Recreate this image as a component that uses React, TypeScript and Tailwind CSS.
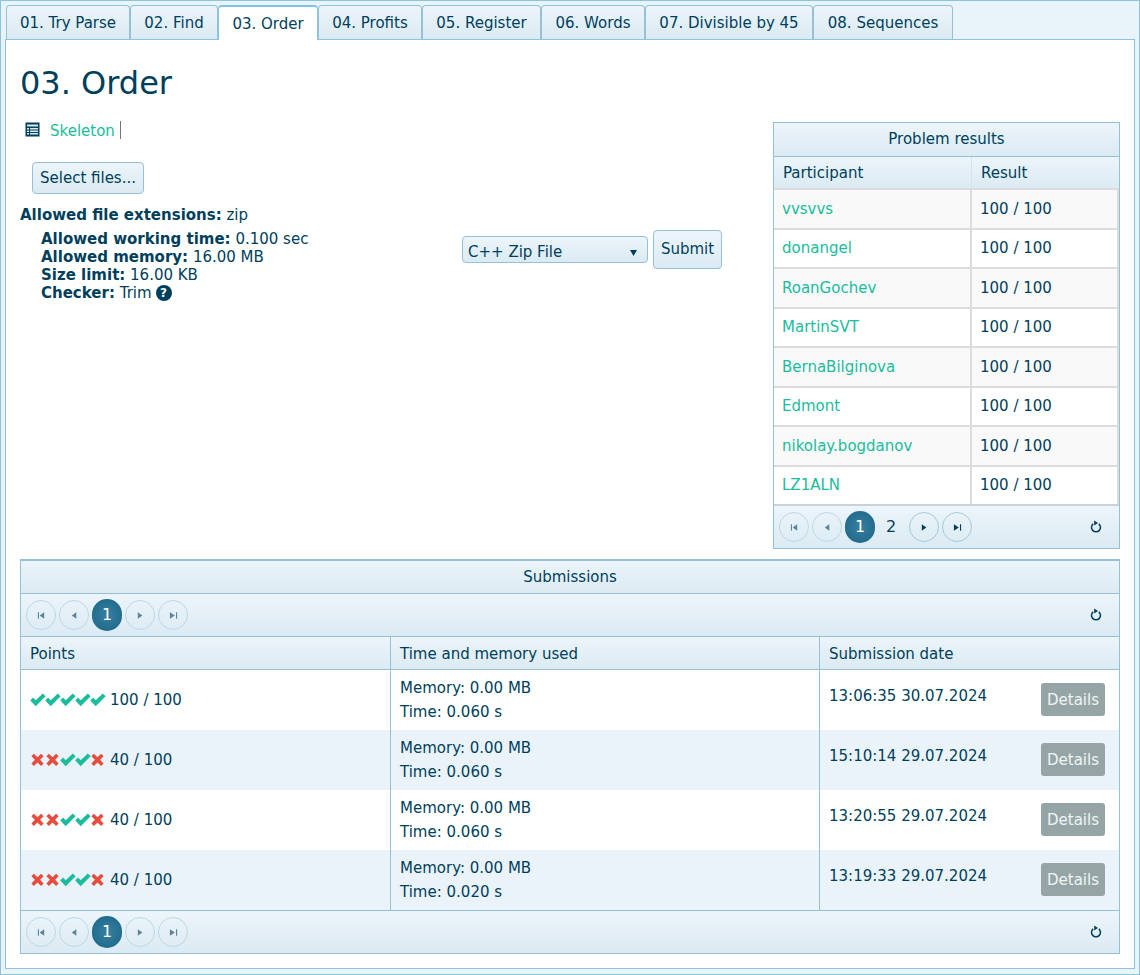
const TABS = [
  { label: "01. Try Parse", w: "w-[124px]" },
  { label: "02. Find", w: "w-[88px]" },
  { label: "03. Order", w: "w-[100px]", active: true },
  { label: "04. Profits", w: "w-[104px]" },
  { label: "05. Register", w: "w-[119px]" },
  { label: "06. Words", w: "w-[104px]" },
  { label: "07. Divisible by 45", w: "w-[168px]" },
  { label: "08. Sequences", w: "w-[140px]" },
];

const RESULTS = [
  "vvsvvs",
  "donangel",
  "RoanGochev",
  "MartinSVT",
  "BernaBilginova",
  "Edmont",
  "nikolay.bogdanov",
  "LZ1ALN",
];

const SUBMISSIONS = [
  { marks: [1, 1, 1, 1, 1], points: "100 / 100", time: "0.060", date: "13:06:35 30.07.2024" },
  { marks: [0, 0, 1, 1, 0], points: "40 / 100", time: "0.060", date: "15:10:14 29.07.2024" },
  { marks: [0, 0, 1, 1, 0], points: "40 / 100", time: "0.060", date: "13:20:55 29.07.2024" },
  { marks: [0, 0, 1, 1, 0], points: "40 / 100", time: "0.020", date: "13:19:33 29.07.2024" },
];

const GRAD = "bg-gradient-to-b from-[#ecf5fa] to-[#dbeaf3]";

function Check() {
  return (
    <svg width="15" height="14" viewBox="0 0 15 14" className="block overflow-visible">
      <path d="M0.3 7.4 L3 4.6 L5.7 7.3 L12.8 0.6 L15.6 3.3 L5.7 13.2 Z" fill="#1abc9c" />
    </svg>
  );
}

function Cross() {
  return (
    <svg width="15" height="14" viewBox="0 0 15 14" className="block overflow-visible">
      <path d="M1.4 3.2 L3.9 0.7 L7.5 4.2 L11.1 0.7 L13.6 3.2 L10.1 6.8 L13.6 10.4 L11.1 12.9 L7.5 9.4 L3.9 12.9 L1.4 10.4 L4.9 6.8 Z" fill="#e74c3c" />
    </svg>
  );
}

function PagerGlyph({ kind, enabled }: { kind: "first" | "prev" | "next" | "last"; enabled?: boolean }) {
  const body = {
    first: "M1 1h1.2v7H1z M8 1v7L3 4.5z",
    prev: "M7 1v7L2 4.5z",
    next: "M2 1v7l5-3.5z",
    last: "M7.8 1H9v7H7.8z M1 1v7l5.5-3.5z",
  }[kind];
  return (
    <svg width="9" height="9" viewBox="0 0 10 9" className={enabled ? "opacity-100" : "opacity-60"}>
      <path d={body} fill="#003f5c" />
    </svg>
  );
}

function PagerButton({ kind, enabled }: { kind: "first" | "prev" | "next" | "last"; enabled?: boolean }) {
  return (
    <span
      className={`flex h-[30px] w-[30px] items-center justify-center rounded-full border ${
        enabled ? "border-[#a3c9dc]" : "border-[#bcd8e6]"
      }`}
    >
      <PagerGlyph kind={kind} enabled={enabled} />
    </span>
  );
}

function Pager({ pages, canNext }: { pages: number; canNext?: boolean }) {
  return (
    <div className={`flex h-[42px] items-center justify-between pl-[5px] pr-[16px] ${GRAD}`}>
      <div className="flex items-center gap-[3px]">
        <PagerButton kind="first" />
        <PagerButton kind="prev" />
        <span className="flex h-[32px] w-[30px] items-center justify-center rounded-full bg-[radial-gradient(circle,_#3a7f9f,_#176486)] text-[16px] text-white">
          1
        </span>
        {pages > 1 && <span className="flex h-[30px] w-[28px] items-center justify-center pr-[2px] text-[16px]">2</span>}
        <PagerButton kind="next" enabled={canNext} />
        <PagerButton kind="last" enabled={canNext} />
      </div>
      <svg width="14" height="14" viewBox="0 0 14 14" fill="none">
        <path d="M4.2 3.8A4.5 4.5 0 1 0 9.8 3.8" stroke="#003f5c" strokeWidth="1.5" />
        <path d="M5.2 0.6v5L9 3z" fill="#003f5c" />
      </svg>
    </div>
  );
}

function ProblemResults() {
  return (
    <div className="h-[427px] w-[347px] border border-[#94c1d6]">
      <div className={`flex h-[34px] items-center justify-center border-b border-[#94c1d6] ${GRAD}`}>Problem results</div>
      <div className={`flex h-[31px] items-center ${GRAD}`}>
        <div className="flex h-full w-[198px] items-center border-r border-[#d5e4ec] pl-[9px] pt-[2px]">Participant</div>
        <div className="pl-[9px] pt-[2px]">Result</div>
      </div>
      {RESULTS.map((name, i) => (
        <div
          key={name}
          className={`flex h-[39.5px] border-r-2 border-t-2 border-[#dcdcdc] ${i % 2 === 0 ? "bg-[#f9f9f9]" : "bg-white"}`}
        >
          <div className="flex w-[198px] items-center border-r-2 border-[#dcdcdc] pl-[8px] text-[#1abc9c]">{name}</div>
          <div className="flex items-center pl-[8px]">100 / 100</div>
        </div>
      ))}
      <div className="border-t-2 border-[#c8d3d9]">
        <Pager pages={2} canNext />
      </div>
    </div>
  );
}

function Submissions() {
  return (
    <div className="border border-t-2 border-[#94c1d6]">
      <div className={`flex h-[33px] items-center justify-center border-b border-[#94c1d6] ${GRAD}`}>Submissions</div>
      <div className="border-b border-[#94c1d6]">
        <Pager pages={1} />
      </div>
      <div className={`flex h-[33px] items-center border-b border-[#94c1d6] ${GRAD}`}>
        <div className="flex h-full w-[370px] items-center border-r border-[#94c1d6] pl-[9px] pt-[2px]">Points</div>
        <div className="flex h-full w-[429px] items-center border-r border-[#94c1d6] pl-[9px] pt-[2px]">Time and memory used</div>
        <div className="pl-[9px] pt-[2px]">Submission date</div>
      </div>
      {SUBMISSIONS.map((s, i) => (
        <div key={s.date} className={`flex h-[60px] ${i % 2 === 1 ? "bg-[#e9f3f9]" : "bg-white"}`}>
          <div className="flex w-[370px] items-center border-r border-[#94c1d6] pl-[9px]">
            <span className="flex">
              {s.marks.map((m, j) => (m ? <Check key={j} /> : <Cross key={j} />))}
            </span>
            <span className="ml-[5px]">{s.points}</span>
          </div>
          <div className="flex w-[429px] flex-col justify-center border-r border-[#94c1d6] pl-[9px] leading-[24px]">
            <div>Memory: 0.00 MB</div>
            <div>Time: {s.time} s</div>
          </div>
          <div className="flex flex-1 items-start justify-between pl-[9px] pr-[14px]">
            <span className="mt-[15px]">{s.date}</span>
            <span className="mt-[13px] flex h-[33px] w-[64px] items-center justify-center rounded-[3px] bg-[#95a5a6] pt-[2px] text-[#f0f4f5]">
              Details
            </span>
          </div>
        </div>
      ))}
      <div className="border-t border-[#94c1d6]">
        <Pager pages={1} />
      </div>
    </div>
  );
}

export default function App() {
  return (
    <div className="h-[975px] w-[1140px] border border-[#8cc4de] bg-[#e9f4fa] pl-[4px] pr-[4px] pt-[4px] font-['DejaVu_Sans',sans-serif] text-[15px] text-[#003f5c]">
      <div className="relative z-10 flex pl-[1px]">
        {TABS.map((t) => (
          <div
            key={t.label}
            className={`flex h-[35px] items-center justify-center rounded-t-[4px] border border-[#94c1d6] pt-[2px] ${t.w} ${
              t.active ? "border-t-2 border-b-0 border-t-[#7fc4e4] border-x-[#8cc4de] bg-white" : `border-b-[#8cc4de] ${GRAD}`
            }`}
          >
            {t.label}
          </div>
        ))}
      </div>
      <div className="-mt-px h-[930px] w-[1130px] border border-[#8cc4de] bg-white px-[14px]">
        <div className="flex h-[509px] justify-between">
          <div className="w-[720px]">
            <h1 className="mt-[23px] text-[32px] leading-[40px]">03. Order</h1>
            <div className="mt-[17px] flex h-[20px] items-center pl-[5px]">
              <svg width="15" height="15" viewBox="0 0 15 15" className="-mt-px">
                <rect x="0.5" y="0.5" width="14" height="14" fill="#003f5c" />
                <rect x="2" y="2.5" width="11" height="2" fill="#dbe8ee" />
                <path d="M2 6h2v1.5H2zM5 6h8v1.5H5zM2 8.5h2V10H2zM5 8.5h8V10H5zM2 11h2v1.5H2zM5 11h8v1.5H5z" fill="#dbe8ee" />
              </svg>
              <span className="ml-[10px] pt-[2px] text-[#1abc9c]">Skeleton</span>
              <span className="ml-[5px] h-[18px] w-px bg-[#777]" />
            </div>
            <button className={`ml-[12px] mt-[22px] h-[32px] w-[112px] rounded-[4px] border border-[#94c1d6] ${GRAD}`}>
              Select files...
            </button>
            <div className="mt-[12px] leading-[18px]">
              <b>Allowed file extensions:</b> zip
            </div>
            <div className="flex items-center justify-between">
              <div className="ml-[21px] mt-[6px] leading-[18px]">
                <div><b>Allowed working time:</b> 0.100 sec</div>
                <div><b>Allowed memory:</b> 16.00 MB</div>
                <div><b>Size limit:</b> 16.00 KB</div>
                <div className="flex items-center">
                  <span><b>Checker:</b> Trim</span>
                  <span className="ml-[4px] flex h-[16px] w-[16px] items-center justify-center rounded-full bg-[#003f5c] text-[12px] font-bold leading-none text-white">?</span>
                </div>
              </div>
              <div className="mb-[28px] flex items-center gap-[5px] pr-[18px]">
                <div className={`flex h-[27px] w-[186px] items-center justify-between rounded-[4px] border border-[#94c1d6] pl-[5px] pr-[10px] ${GRAD}`}>
                  <span className="mt-[6px]">C++ Zip File</span>
                  <svg className="mt-[7px]" width="7" height="6" viewBox="0 0 7 6"><path d="M0 0h7L3.5 6z" fill="#003f5c" /></svg>
                </div>
                <button className={`h-[39px] w-[69px] rounded-[4px] border border-[#94c1d6] ${GRAD}`}>Submit</button>
              </div>
            </div>
          </div>
          <div className="mt-[82px]">
            <ProblemResults />
          </div>
        </div>
        <div className="mt-[10px]">
          <Submissions />
        </div>
      </div>
    </div>
  );
}
